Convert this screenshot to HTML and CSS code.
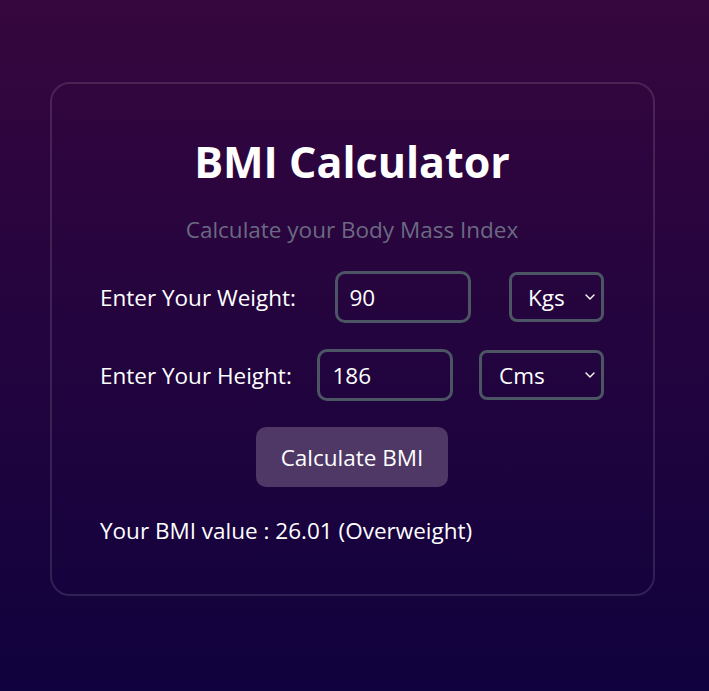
FILE: index.html
```html
<!DOCTYPE html>
<html lang="en">
<head>
<meta charset="utf-8">
<title>BMI Calculator</title>
<link rel="stylesheet" href="styles.css">
</head>
<body>
<main class="card">
  <h1 class="title">BMI Calculator</h1>
  <p class="subtitle">Calculate your Body Mass Index</p>
  <div class="row">
    <label class="label" for="w">Enter Your Weight:</label>
    <input class="field" id="w" type="text" value="90">
    <div class="select-wrap select-kg">
      <select class="select"><option>Kgs</option><option>Lbs</option></select>
      <svg class="chev" viewBox="0 0 10 6" width="10" height="6"><path d="M1 1 L5 5 L9 1" fill="none" stroke="#fff" stroke-width="1.4" stroke-linecap="round" stroke-linejoin="round"/></svg>
    </div>
  </div>
  <div class="row">
    <label class="label" for="h">Enter Your Height:</label>
    <input class="field" id="h" type="text" value="186">
    <div class="select-wrap select-cm">
      <select class="select"><option>Cms</option><option>Feet</option></select>
      <svg class="chev" viewBox="0 0 10 6" width="10" height="6"><path d="M1 1 L5 5 L9 1" fill="none" stroke="#fff" stroke-width="1.4" stroke-linecap="round" stroke-linejoin="round"/></svg>
    </div>
  </div>
  <div class="actions">
    <button class="btn" type="button">Calculate BMI</button>
  </div>
  <p class="result">Your BMI value : 26.01 (Overweight)</p>
</main>
</body>
</html>
```
FILE: styles.css
```css
html, body {
  margin: 0;
  height: 100%;
}
body {
  background: linear-gradient(180deg, #36063e 0%, #10023e 100%);
  font-family: "Open Sans", "Noto Sans", sans-serif;
  color: #fff;
  padding-top: 82px;
  box-sizing: border-box;
}
.card {
  width: 605px;
  box-sizing: border-box;
  margin: 0 auto 0 50px;
  border: 2px solid rgba(255, 255, 255, 0.12);
  border-radius: 20px;
  padding: 50px 49px 50px 48px;
  height: 514px;
}
.title {
  margin: 0;
  text-align: center;
  font-size: 43px;
  line-height: 56px;
  font-weight: 700;
}
.subtitle {
  margin: 25px 0 26px;
  text-align: center;
  color: #6b6a82;
  font-size: 22.5px;
  line-height: 30px;
}
.row {
  display: flex;
  align-items: center;
  justify-content: space-between;
  margin-bottom: 26px;
}
.label {
  font-size: 22.5px;
}
.field {
  width: 136px;
  height: 52px;
  box-sizing: border-box;
  border: 3px solid #4b5563;
  border-radius: 10px;
  background: transparent;
  color: #fff;
  font: inherit;
  font-size: 22.5px;
  padding: 0 12px;
  outline: none;
}
.select-wrap {
  position: relative;
  display: flex;
}
.select {
  appearance: none;
  -webkit-appearance: none;
  height: 50px;
  box-sizing: border-box;
  border: 3px solid #4b5563;
  border-radius: 8px;
  background: transparent;
  color: #fff;
  font: inherit;
  font-size: 22.5px;
  padding: 0 0 0 16px;
}
.select-kg .select { width: 95px; }
.select-cm .select { width: 125px; padding-left: 17px; }
.chev {
  position: absolute;
  right: 9px;
  top: 22px;
  pointer-events: none;
}
.actions {
  display: flex;
  justify-content: center;
}
.btn {
  width: 192px;
  height: 60px;
  border: none;
  border-radius: 10px;
  background: #4f3766;
  color: #fff;
  font: inherit;
  font-size: 22.5px;
}
.result {
  margin: 29px 0 0;
  font-size: 22.5px;
  line-height: 30px;
}
```
